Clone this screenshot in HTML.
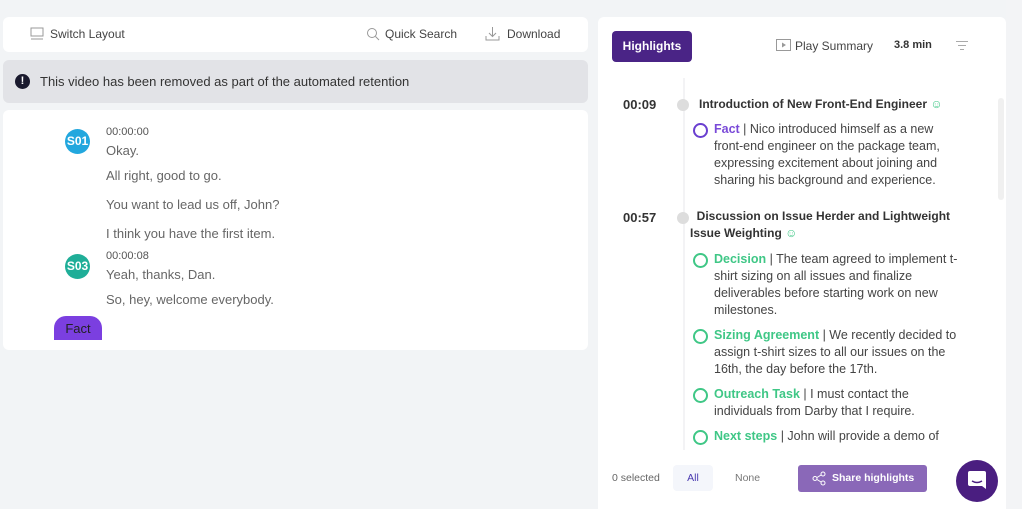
<!DOCTYPE html>
<html><head><meta charset="utf-8"><style>
*{margin:0;padding:0;box-sizing:border-box}
body{width:1022px;height:509px;background:#f2f4f6;font-family:"Liberation Sans",sans-serif;position:relative;overflow:hidden;color:#444}
.a{position:absolute}
.card{background:#fff;border-radius:6px}
.t{font-size:13px;color:#666;white-space:nowrap}
.hl{font-size:12.5px;color:#444;line-height:17px;width:246px}
.circ{width:15px;height:15px;border-radius:50%;border:2px solid #3fc786}
</style></head><body>
<div class="a card" style="left:3px;top:17px;width:585px;height:35px"></div>
<svg class="a" style="left:30px;top:27px" width="14" height="13"><rect x="1" y="1" width="12" height="8" fill="none" stroke="#999"/><line x1="1" y1="12" x2="13" y2="12" stroke="#999"/></svg>
<div class="a t" style="left:50px;top:27px;font-size:12px;color:#444">Switch Layout</div>
<svg class="a" style="left:366px;top:27px" width="14" height="14"><circle cx="6" cy="6" r="4.5" fill="none" stroke="#999"/><line x1="9.5" y1="9.5" x2="13" y2="13" stroke="#999"/></svg>
<div class="a t" style="left:385px;top:27px;font-size:12px;color:#444">Quick Search</div>
<svg class="a" style="left:485px;top:26px" width="15" height="15"><path d="M7.5 1v9M4 7l3.5 3.5L11 7M1 10v4h13v-4" fill="none" stroke="#999"/></svg>
<div class="a t" style="left:507px;top:27px;font-size:12px;color:#444">Download</div>
<div class="a" style="left:3px;top:60px;width:585px;height:43px;background:#e2e3e7;border-radius:6px"></div>
<div class="a" style="left:15px;top:74px;width:15px;height:15px;border-radius:50%;background:#1a1a2e;color:#fff;font-size:11px;font-weight:bold;text-align:center;line-height:15px">!</div>
<div class="a t" style="left:40px;top:74px;color:#333">This video has been removed as part of the automated retention</div>
<div class="a card" style="left:3px;top:110px;width:585px;height:240px"></div>
<div class="a" style="left:65px;top:129px;width:25px;height:25px;border-radius:50%;background:#22a7de;color:#fff;font-size:12px;font-weight:bold;text-align:center;line-height:25px">S01</div>
<div class="a t" style="left:106px;top:126px;font-size:11px;color:#555">00:00:00</div>
<div class="a t" style="left:106px;top:143px">Okay.</div>
<div class="a t" style="left:106px;top:168px">All right, good to go.</div>
<div class="a t" style="left:106px;top:197px">You want to lead us off, John?</div>
<div class="a t" style="left:106px;top:226px">I think you have the first item.</div>
<div class="a" style="left:65px;top:254px;width:25px;height:25px;border-radius:50%;background:#1fae98;color:#fff;font-size:12px;font-weight:bold;text-align:center;line-height:25px">S03</div>
<div class="a t" style="left:106px;top:250px;font-size:11px;color:#555">00:00:08</div>
<div class="a t" style="left:106px;top:267px">Yeah, thanks, Dan.</div>
<div class="a t" style="left:106px;top:292px">So, hey, welcome everybody.</div>
<div class="a" style="left:54px;top:316px;width:48px;height:24px;border-radius:12px 12px 0 0;background:#7b3fe0;color:#222;font-size:13px;text-align:center;line-height:26px">Fact</div>

<div class="a card" style="left:598px;top:17px;width:408px;height:492px;border-radius:6px 6px 0 0"></div>
<div class="a" style="left:1006px;top:0;width:16px;height:509px;background:#f3f4f6"></div>
<div class="a" style="left:612px;top:31px;width:80px;height:31px;background:#4a2486;border-radius:4px;color:#fff;font-size:12px;font-weight:bold;text-align:center;line-height:31px">Highlights</div>
<svg class="a" style="left:776px;top:39px" width="15" height="12"><rect x="0.5" y="0.5" width="14" height="11" fill="none" stroke="#999"/><path d="M6 3.5v5l4-2.5z" fill="#999"/></svg>
<div class="a t" style="left:795px;top:39px;font-size:12px;color:#444">Play Summary</div>
<div class="a t" style="left:894px;top:39px;font-size:11px;color:#333;font-weight:bold">3.8 min</div>
<svg class="a" style="left:955px;top:40px" width="14" height="11"><path d="M1 1.5h12M3 5.5h8M5 9.5h4" stroke="#aaa"/></svg>
<div class="a" style="left:683px;top:78px;width:2px;height:380px;background:#f3f3f5"></div>
<div class="a" style="left:998px;top:98px;width:6px;height:102px;background:#f0f0f0;border-radius:3px"></div>
<div class="a t" style="left:623px;top:97px;font-weight:bold;color:#333">00:09</div>
<div class="a" style="left:677px;top:99px;width:12px;height:12px;border-radius:50%;background:#ddd"></div>
<div class="a t" style="left:699px;top:97px;font-size:12px;font-weight:bold;color:#333">Introduction of New Front-End Engineer <span style="color:#3fc786;font-weight:normal">☺</span></div>
<div class="a circ" style="left:693px;top:123px;border-color:#6a3fd0"></div>
<div class="a hl" style="left:714px;top:121px;width:232px"><span style="color:#7a4ad8;font-weight:bold">Fact</span> | Nico introduced himself as a new front-end engineer on the package team, expressing excitement about joining and sharing his background and experience.</div>
<div class="a t" style="left:623px;top:210px;font-weight:bold;color:#333">00:57</div>
<div class="a" style="left:677px;top:212px;width:12px;height:12px;border-radius:50%;background:#ddd"></div>
<div class="a hl" style="left:690px;top:208px;width:270px;font-weight:bold;color:#333;font-size:12px">&nbsp;&nbsp;Discussion on Issue Herder and Lightweight Issue Weighting <span style="color:#3fc786;font-weight:normal">☺</span></div>
<div class="a circ" style="left:693px;top:253px"></div>
<div class="a hl" style="left:714px;top:251px"><span style="color:#3fc786;font-weight:bold">Decision</span> | The team agreed to implement t-shirt sizing on all issues and finalize deliverables before starting work on new milestones.</div>
<div class="a circ" style="left:693px;top:329px"></div>
<div class="a hl" style="left:714px;top:327px"><span style="color:#3fc786;font-weight:bold">Sizing Agreement</span> | We recently decided to assign t-shirt sizes to all our issues on the 16th, the day before the 17th.</div>
<div class="a circ" style="left:693px;top:388px"></div>
<div class="a hl" style="left:714px;top:386px;width:220px"><span style="color:#3fc786;font-weight:bold">Outreach Task</span> | I must contact the individuals from Darby that I require.</div>
<div class="a circ" style="left:693px;top:430px"></div>
<div class="a hl" style="left:714px;top:428px;height:20px;overflow:hidden"><span style="color:#3fc786;font-weight:bold">Next steps</span> | John will provide a demo of</div>
<div class="a" style="left:598px;top:450px;width:408px;height:59px;background:#fff"></div>
<div class="a t" style="left:612px;top:472px;font-size:10.5px;color:#666">0 selected</div>
<div class="a" style="left:673px;top:465px;width:40px;height:26px;background:#f4f6fb;border-radius:4px;color:#4a3ab0;font-size:10.5px;text-align:center;line-height:26px">All</div>
<div class="a t" style="left:735px;top:472px;font-size:10.5px;color:#777">None</div>
<div class="a" style="left:798px;top:465px;width:129px;height:27px;background:#8a68b8;border-radius:3px;color:#fff;font-size:10.5px;font-weight:bold;line-height:27px;padding-left:34px">Share highlights</div>
<svg class="a" style="left:812px;top:471px" width="14" height="15"><circle cx="3" cy="7.5" r="2" fill="none" stroke="#fff"/><circle cx="11" cy="3" r="2" fill="none" stroke="#fff"/><circle cx="11" cy="12" r="2" fill="none" stroke="#fff"/><path d="M5 6.5l4-2.5M5 8.5l4 2.5" stroke="#fff"/></svg>
<div class="a" style="left:956px;top:460px;width:42px;height:42px;border-radius:50%;background:#4a1e80"></div>
<svg class="a" style="left:967px;top:470px" width="20" height="22"><path d="M3 1h14a2 2 0 0 1 2 2v16l-4-3H3a2 2 0 0 1-2-2V3a2 2 0 0 1 2-2z" fill="#fff"/><path d="M5 11q5 3 10 0" fill="none" stroke="#4a1e80" stroke-width="1.5"/></svg>
</body></html>
